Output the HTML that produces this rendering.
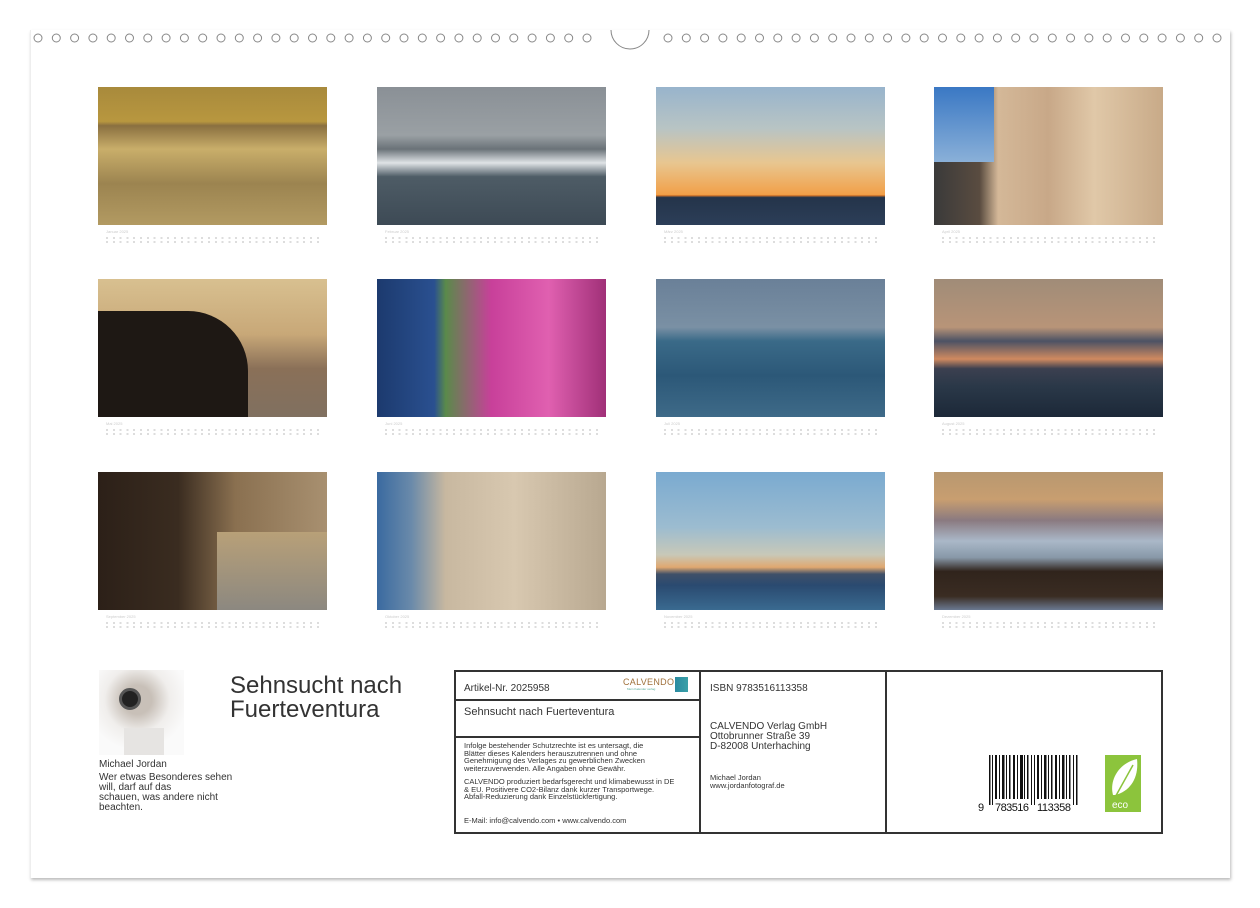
<!DOCTYPE html>
<html><head><meta charset="utf-8"><style>
*{margin:0;padding:0;box-sizing:border-box}
body{width:1260px;height:908px;background:#fff;position:relative;overflow:hidden;font-family:"Liberation Sans",sans-serif;color:#222}
.sheet{position:absolute;left:30px;top:30px;width:1200px;height:848px;background:#fff;border-left:1px solid #eee;box-shadow:1px 2px 3px #bbb}
.rings{position:absolute;left:0;top:30px;width:1260px;height:20px}
.p{position:absolute;width:229px;height:138px}
.cal{position:absolute;width:229px;height:14px}
.cal i{position:absolute;left:8px;top:0;font-size:4px;color:#ccc;font-style:normal}
.cal b{position:absolute;left:8px;right:8px;height:2px;background:repeating-linear-gradient(90deg,#ddd 0 2px,transparent 2px 6.8px)}
.box{position:absolute;left:454px;top:670px;width:709px;height:164px;border:2px solid #333}
.t{position:absolute;font-size:9px;line-height:9px;color:#333}
</style></head><body>
<div class="sheet"></div>
<svg class="rings" viewBox="0 30 1260 20" width="1260" height="20">
<g fill="none" stroke="#888" stroke-width="1">
<circle cx="38" cy="38" r="4"/><circle cx="56.3" cy="38" r="4"/><circle cx="74.6" cy="38" r="4"/><circle cx="92.9" cy="38" r="4"/><circle cx="111.2" cy="38" r="4"/><circle cx="129.5" cy="38" r="4"/><circle cx="147.8" cy="38" r="4"/><circle cx="166.1" cy="38" r="4"/><circle cx="184.4" cy="38" r="4"/><circle cx="202.7" cy="38" r="4"/><circle cx="221" cy="38" r="4"/><circle cx="239.3" cy="38" r="4"/><circle cx="257.6" cy="38" r="4"/><circle cx="275.9" cy="38" r="4"/><circle cx="294.2" cy="38" r="4"/><circle cx="312.5" cy="38" r="4"/><circle cx="330.8" cy="38" r="4"/><circle cx="349.1" cy="38" r="4"/><circle cx="367.4" cy="38" r="4"/><circle cx="385.7" cy="38" r="4"/><circle cx="404" cy="38" r="4"/><circle cx="422.3" cy="38" r="4"/><circle cx="440.6" cy="38" r="4"/><circle cx="458.9" cy="38" r="4"/><circle cx="477.2" cy="38" r="4"/><circle cx="495.5" cy="38" r="4"/><circle cx="513.8" cy="38" r="4"/><circle cx="532.1" cy="38" r="4"/><circle cx="550.4" cy="38" r="4"/><circle cx="568.7" cy="38" r="4"/><circle cx="587" cy="38" r="4"/>
<path d="M611 30 A19 19 0 0 0 649 30"/>
<circle cx="668" cy="38" r="4"/><circle cx="686.3" cy="38" r="4"/><circle cx="704.6" cy="38" r="4"/><circle cx="722.9" cy="38" r="4"/><circle cx="741.2" cy="38" r="4"/><circle cx="759.5" cy="38" r="4"/><circle cx="777.8" cy="38" r="4"/><circle cx="796.1" cy="38" r="4"/><circle cx="814.4" cy="38" r="4"/><circle cx="832.7" cy="38" r="4"/><circle cx="851" cy="38" r="4"/><circle cx="869.3" cy="38" r="4"/><circle cx="887.6" cy="38" r="4"/><circle cx="905.9" cy="38" r="4"/><circle cx="924.2" cy="38" r="4"/><circle cx="942.5" cy="38" r="4"/><circle cx="960.8" cy="38" r="4"/><circle cx="979.1" cy="38" r="4"/><circle cx="997.4" cy="38" r="4"/><circle cx="1015.7" cy="38" r="4"/><circle cx="1034" cy="38" r="4"/><circle cx="1052.3" cy="38" r="4"/><circle cx="1070.6" cy="38" r="4"/><circle cx="1088.9" cy="38" r="4"/><circle cx="1107.2" cy="38" r="4"/><circle cx="1125.5" cy="38" r="4"/><circle cx="1143.8" cy="38" r="4"/><circle cx="1162.1" cy="38" r="4"/><circle cx="1180.4" cy="38" r="4"/><circle cx="1198.7" cy="38" r="4"/><circle cx="1217" cy="38" r="4"/>
</g></svg>

<!-- row 1 -->
<div class="p" style="left:98px;top:87px;background:linear-gradient(#a88a3c 0%,#b8973f 25%,#8a7040 28%,#c9ae6a 45%,#9c8450 70%,#b29a62 100%)"></div>
<div class="p" style="left:377px;top:87px;background:linear-gradient(#8a9096 0%,#9aa0a4 35%,#6a7278 45%,#dfe3e6 55%,#4e5c66 65%,#3d4a55 100%)"></div>
<div class="p" style="left:656px;top:87px;background:linear-gradient(#98b4cc 0%,#b8c4c4 30%,#e8c690 55%,#f2a048 78%,#e37d2a 78.5%,#24344a 80%,#2c3e58 100%)"></div>
<div class="p" style="left:934px;top:87px;background:linear-gradient(90deg,#3a3a3a 0%,#5a4c40 20%,#d4b898 28%,#c8a888 50%,#e0c8a8 70%,#c8aa88 100%)"><div style="position:absolute;left:0;top:0;width:60px;height:75px;background:linear-gradient(#3a78c4,#8ab0d8)"></div></div>
<!-- row 2 -->
<div class="p" style="left:98px;top:279px;background:linear-gradient(#d8c090 0%,#c8a878 40%,#8a7058 65%,#807060 100%)"><div style="position:absolute;left:0;top:32px;width:150px;height:106px;background:#1e1814;border-radius:0 60px 0 0"></div></div>
<div class="p" style="left:377px;top:279px;background:linear-gradient(90deg,#1c3a6e 0%,#2a5090 25%,#5a8a4a 30%,#c8409a 50%,#e060b0 75%,#a03078 100%)"></div>
<div class="p" style="left:656px;top:279px;background:linear-gradient(#6a8098 0%,#7a90a4 35%,#3a6a88 45%,#2c5878 70%,#3e6a88 100%)"></div>
<div class="p" style="left:934px;top:279px;background:linear-gradient(#a08c78 0%,#b89478 35%,#4c5264 45%,#d08a60 58%,#3c4050 65%,#2a3848 78%,#1c2838 100%)"></div>
<!-- row 3 -->
<div class="p" style="left:98px;top:472px;background:linear-gradient(90deg,#2c2018 0%,#3a2c20 35%,#8a7050 60%,#a89070 100%)"><div style="position:absolute;right:0;top:60px;width:110px;height:78px;background:linear-gradient(#b8a078,#8c8880)"></div></div>
<div class="p" style="left:377px;top:472px;background:linear-gradient(90deg,#3a6aa0 0%,#6a8aaa 15%,#c8b8a0 30%,#d8c8b0 60%,#b8a890 100%)"></div>
<div class="p" style="left:656px;top:472px;background:linear-gradient(#7aaad0 0%,#9cbcd0 40%,#c8c8b8 60%,#e0a870 69%,#405068 74%,#2a4a70 82%,#3a6a90 100%)"></div>
<div class="p" style="left:934px;top:472px;background:linear-gradient(#b89870 0%,#c89e70 20%,#8a7a80 35%,#aab8c8 50%,#8898a8 62%,#30241c 72%,#3a2c22 90%,#6a7890 100%)"></div>

<div class="cal" style="left:98px;top:229px"><i>Januar 2025</i><b style="top:8px"></b><b style="top:12px"></b></div>
<div class="cal" style="left:377px;top:229px"><i>Februar 2025</i><b style="top:8px"></b><b style="top:12px"></b></div>
<div class="cal" style="left:656px;top:229px"><i>März 2025</i><b style="top:8px"></b><b style="top:12px"></b></div>
<div class="cal" style="left:934px;top:229px"><i>April 2025</i><b style="top:8px"></b><b style="top:12px"></b></div>
<div class="cal" style="left:98px;top:421px"><i>Mai 2025</i><b style="top:8px"></b><b style="top:12px"></b></div>
<div class="cal" style="left:377px;top:421px"><i>Juni 2025</i><b style="top:8px"></b><b style="top:12px"></b></div>
<div class="cal" style="left:656px;top:421px"><i>Juli 2025</i><b style="top:8px"></b><b style="top:12px"></b></div>
<div class="cal" style="left:934px;top:421px"><i>August 2025</i><b style="top:8px"></b><b style="top:12px"></b></div>
<div class="cal" style="left:98px;top:614px"><i>September 2025</i><b style="top:8px"></b><b style="top:12px"></b></div>
<div class="cal" style="left:377px;top:614px"><i>Oktober 2025</i><b style="top:8px"></b><b style="top:12px"></b></div>
<div class="cal" style="left:656px;top:614px"><i>November 2025</i><b style="top:8px"></b><b style="top:12px"></b></div>
<div class="cal" style="left:934px;top:614px"><i>Dezember 2025</i><b style="top:8px"></b><b style="top:12px"></b></div>

<!-- author -->
<div style="position:absolute;left:99px;top:670px;width:85px;height:85px;background:radial-gradient(circle at 45% 35%,#c8c0b8 0 20%,#f0eeec 45%,#fafafa 70%)">
<div style="position:absolute;left:20px;top:18px;width:22px;height:22px;border-radius:50%;background:#222;border:3px solid #555"></div>
<div style="position:absolute;left:25px;top:58px;width:40px;height:27px;background:#e6e4e2"></div></div>
<div class="t" style="left:99px;top:759px;font-size:10px;line-height:11px">Michael Jordan</div>
<div class="t" style="left:99px;top:773px;font-size:10px;line-height:10px">Wer etwas Besonderes sehen<br>will, darf auf das<br>schauen, was andere nicht<br>beachten.</div>
<div style="position:absolute;left:230px;top:674px;font-size:24px;line-height:24px;color:#333">Sehnsucht nach<br>Fuerteventura</div>

<div class="box">
<div style="position:absolute;left:243px;top:0;bottom:0;border-left:2px solid #333"></div>
<div style="position:absolute;left:429px;top:0;bottom:0;border-left:2px solid #333"></div>
<div style="position:absolute;left:0;width:243px;top:27px;border-top:2px solid #333"></div>
<div style="position:absolute;left:0;width:243px;top:64px;border-top:2px solid #333"></div>
</div>
<div class="t" style="left:464px;top:684px;font-size:10px">Artikel-Nr. 2025958</div>
<div style="position:absolute;left:623px;top:677px;font-size:9px;color:#a0703a;letter-spacing:0.3px">CALVENDO</div>
<div style="position:absolute;left:627px;top:687px;font-size:3px;color:#5a9;">Mein Kalender verlag</div>
<div style="position:absolute;left:675px;top:677px;width:13px;height:15px;background:linear-gradient(90deg,#2a8aa0,#3aa0a8)"></div>
<div class="t" style="left:464px;top:707px;font-size:11px;line-height:11px">Sehnsucht nach Fuerteventura</div>
<div class="t" style="left:464px;top:742px;font-size:7.5px;line-height:7.6px">Infolge bestehender Schutzrechte ist es untersagt, die<br>Blätter dieses Kalenders herauszutrennen und ohne<br>Genehmigung des Verlages zu gewerblichen Zwecken<br>weiterzuverwenden. Alle Angaben ohne Gewähr.</div>
<div class="t" style="left:464px;top:778px;font-size:7.5px;line-height:7.6px">CALVENDO produziert bedarfsgerecht und klimabewusst in DE<br>&amp; EU. Positivere CO2-Bilanz dank kurzer Transportwege.<br>Abfall-Reduzierung dank Einzelstückfertigung.</div>
<div class="t" style="left:464px;top:816px;font-size:7.5px">E-Mail: info@calvendo.com • www.calvendo.com</div>
<div class="t" style="left:710px;top:684px;font-size:10px">ISBN 9783516113358</div>
<div class="t" style="left:710px;top:722px;font-size:10px;line-height:10px">CALVENDO Verlag GmbH<br>Ottobrunner Straße 39<br>D-82008 Unterhaching</div>
<div class="t" style="left:710px;top:774px;font-size:7.5px;line-height:8px">Michael Jordan<br>www.jordanfotograf.de</div>

<svg style="position:absolute;left:975px;top:755px" width="105" height="60">
<g fill="#111" transform="translate(12,0)">
<rect x="2" y="0" width="1.5" height="50"/><rect x="5" y="0" width="1" height="50"/><rect x="8" y="0" width="2" height="44"/><rect x="12" y="0" width="1" height="44"/><rect x="15" y="0" width="2.5" height="44"/><rect x="19" y="0" width="1" height="44"/><rect x="22" y="0" width="1.5" height="44"/><rect x="26" y="0" width="2" height="44"/><rect x="30" y="0" width="1" height="44"/><rect x="33" y="0" width="3" height="44"/><rect x="37" y="0" width="1" height="44"/><rect x="40" y="0" width="1.5" height="44"/><rect x="44" y="0" width="1" height="50"/><rect x="47" y="0" width="1" height="50"/><rect x="50" y="0" width="2" height="44"/><rect x="54" y="0" width="1" height="44"/><rect x="57" y="0" width="2.5" height="44"/><rect x="61" y="0" width="1" height="44"/><rect x="64" y="0" width="1.5" height="44"/><rect x="68" y="0" width="2" height="44"/><rect x="72" y="0" width="1" height="44"/><rect x="75" y="0" width="2.5" height="44"/><rect x="79" y="0" width="1" height="44"/><rect x="82" y="0" width="1.5" height="44"/><rect x="86" y="0" width="1" height="50"/><rect x="89" y="0" width="1.5" height="50"/>
</g>
<text x="3" y="56" font-size="11" font-family="Liberation Sans" fill="#111">9</text>
<text x="20" y="56" font-size="11" font-family="Liberation Sans" fill="#111" textLength="34">783516</text>
<text x="62" y="56" font-size="11" font-family="Liberation Sans" fill="#111" textLength="34">113358</text>
</svg>
<div style="position:absolute;left:1105px;top:755px;width:36px;height:57px;background:#8cc43c">
<svg width="36" height="57"><path d="M8 40 C4 25 14 8 32 4 C34 22 26 36 10 40 Z" fill="#fff"/><path d="M8 46 L28 10" stroke="#8cc43c" stroke-width="1.5"/><text x="7" y="53" font-size="10" fill="#fff" font-family="Liberation Sans">eco</text></svg></div>
</body></html>
